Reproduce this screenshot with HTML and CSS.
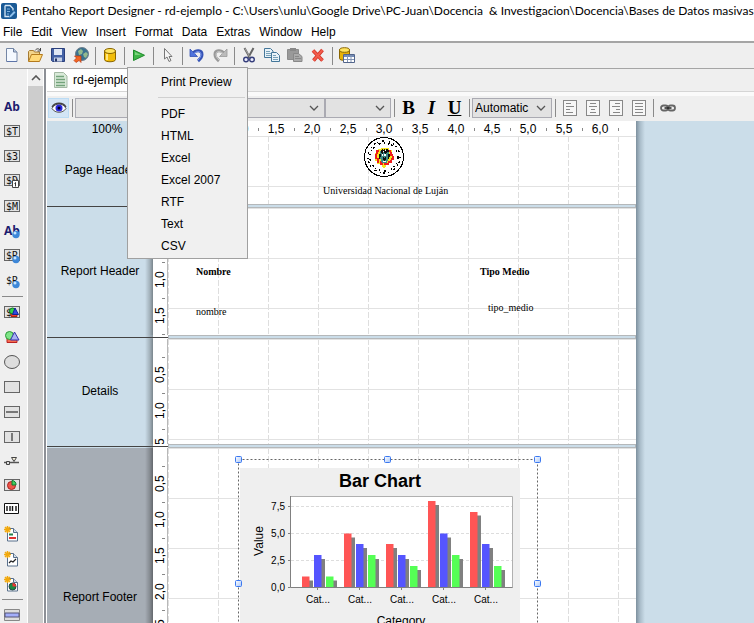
FILE: index.html
```html
<!DOCTYPE html>
<html lang="en">
<head>
<meta charset="utf-8">
<title>Pentaho Report Designer</title>
<link rel="stylesheet" href="styles.css">
</head>
<body>
<header class="titlebar">
  <svg width="16" height="16" viewBox="0 0 16 16" aria-hidden="true"><rect width="16" height="16" rx="2" fill="#1a5a96"/><path d="M4 2.500h5l3 3v2M4 2.500v11h4" fill="none" stroke="#d5e6f5" stroke-width="1.300"/><path d="M6 6h3M6 8.500h3M6 11h2" stroke="#7fb2df"/><path d="M8.500 13l4.500-5 1.500 1.500-4.500 4.500-2 .5z" fill="#8fc1ec"/></svg>
  <span class="title">Pentaho Report Designer - rd-ejemplo - C:\Users\unlu\Google Drive\PC-Juan\Docencia&nbsp; &amp; Investigacion\Docencia\Bases de Datos masivas</span>
</header>
<nav class="menubar">
  <button>File</button><button>Edit</button><button>View</button><button>Insert</button><button>Format</button><button>Data</button><button>Extras</button><button>Window</button><button>Help</button>
</nav>
<div class="toolbar">
  <button class="tool" aria-label="New"><svg width="16" height="16" viewBox="0 0 16 16"><path d="M2.500 1.500h7l3.500 3.500v9.500h-10.500z" fill="#f4f9ff" stroke="#7486a5"/><path d="M9.500 1.500v3.500h3.500" fill="#b9cbe2" stroke="#6c7e9d"/><path d="M3 14.500h10" stroke="#5d74a8"/></svg></button>
  <button class="tool" aria-label="Open"><svg width="16" height="16" viewBox="0 0 16 16"><path d="M1.500 14v-9.500l1-1h4l1 1.500h5v3" fill="#f2d48b" stroke="#a67b32"/><path d="M1.500 14.500l3-7h11l-3 7z" fill="#ffd978" stroke="#b47a1c"/><path d="M8 3.500c2-2.500 4-2 5.500 0m0-2.500v3h-3" fill="none" stroke="#444"/></svg></button>
  <button class="tool" aria-label="Save"><svg width="16" height="16" viewBox="0 0 16 16"><path d="M1.500 1.500h13v13h-12l-1-1z" fill="#4462a6" stroke="#2a3f7c"/><path d="M4 2h8v6h-8z" fill="#dfe7f4"/><path d="M4 10.500h8v4h-8z" fill="#c6d0e5"/><path d="M5 11.500h2v3h-2z" fill="#26376b"/></svg></button>
  <button class="tool" aria-label="Publish"><svg width="16" height="16" viewBox="0 0 16 16"><circle cx="9" cy="7" r="6.500" fill="#39718f" stroke="#6f7f8c"/><path d="M5 4l3-2 2 2-1 3-3 1zM10 7l3-2 2 2-2 4-2-1z" fill="#93b98e"/><path d="M1.500 9h6.500v6.500l-2-2-3 2-2-2 2.500-2.500z" fill="#f26522" stroke="#b93a12" stroke-width=".7"/></svg></button>
  <span class="sep"></span>
  <button class="tool" aria-label="Data source"><svg width="16" height="16" viewBox="0 0 16 16"><path d="M2.500 4v8.500c0 3 11 3 11 0v-8.500z" fill="#f2bd08" stroke="#8a6500"/><ellipse cx="8" cy="4" rx="5.500" ry="2.500" fill="#ffe45e" stroke="#8a6500"/><path d="M5 7v6" stroke="#ffe680" stroke-width="2"/></svg></button>
  <span class="sep"></span>
  <div class="tool-menu">
    <button class="tool" aria-label="Run"><svg width="16" height="16" viewBox="0 0 16 16"><path d="M2.500 3v10.500l11-5.250z" fill="#3fb548" stroke="#1e8a2b"/><path d="M4 5v3l6 0z" fill="#7bd47d"/></svg></button>
    <div class="popup" role="menu">
      <button role="menuitem">Print Preview</button>
      <hr>
      <button role="menuitem">PDF</button><button role="menuitem">HTML</button><button role="menuitem">Excel</button><button role="menuitem">Excel 2007</button><button role="menuitem">RTF</button><button role="menuitem">Text</button><button role="menuitem">CSV</button>
    </div>
  </div>
  <span class="sep"></span>
  <button class="tool" aria-label="Select"><svg width="16" height="16" viewBox="0 0 16 16"><path d="M4.500 1.500v10.500l2.500-2 2 4.500 2-1-2-4h3z" fill="#f5f5f5" stroke="#777"/></svg></button>
  <span class="sep"></span>
  <button class="tool" aria-label="Undo"><svg width="16" height="16" viewBox="0 0 16 16"><path d="M4 6.500c3-4 9-3.500 9 1 0 2.500-1.500 4.500-4 6.500" fill="none" stroke="#3553b5" stroke-width="3"/><path d="M1 2v7.500h7.500z" fill="#4f73dd" stroke="#3553b5" stroke-width=".8"/><path d="M5 6.500c3-3 7-2.500 7 1 0 2-1 3.500-3 5.500" fill="none" stroke="#7f9df2"/></svg></button>
  <button class="tool" aria-label="Redo"><svg width="16" height="16" viewBox="0 0 16 16"><path d="M12 6.500c-3-4-9-3.500-9 1 0 2.500 1.500 4.500 4 6.500" fill="none" stroke="#999" stroke-width="3"/><path d="M15 2v7.500h-7.500z" fill="#bbb" stroke="#999" stroke-width=".8"/><path d="M11 6.500c-3-3-7-2.500-7 1 0 2 1 3.500 3 5.500" fill="none" stroke="#ccc"/></svg></button>
  <span class="sep"></span>
  <button class="tool" aria-label="Cut"><svg width="16" height="16" viewBox="0 0 16 16"><path d="M3.500 1l5.500 10M12.500 1l-5.500 10" stroke="#666" stroke-width="2"/><path d="M4 1.500l5 9" stroke="#bbb" stroke-width=".7"/><circle cx="5" cy="12.500" r="2.300" fill="#eef" stroke="#363f7b" stroke-width="1.400"/><circle cx="11" cy="12.500" r="2.300" fill="#eef" stroke="#363f7b" stroke-width="1.400"/></svg></button>
  <button class="tool" aria-label="Copy"><svg width="16" height="16" viewBox="0 0 16 16"><path d="M.5 1.500h6l2.500 2.500v6.500h-8.500z" fill="#e8f2f8" stroke="#44779a"/><path d="M2 4.500h4M2 6.500h5M2 8.500h5" stroke="#77a0b8"/><path d="M7.500 5.500h5l3 3v6h-8z" fill="#e8f2f8" stroke="#44779a"/><path d="M9 8.500h3M9 10.500h5M9 12.500h5" stroke="#77a0b8"/></svg></button>
  <button class="tool" aria-label="Paste"><svg width="16" height="16" viewBox="0 0 16 16"><path d="M.5 2.500h11v10h-11z" fill="#999" stroke="#8c8c8c"/><path d="M3 1h6v3h-6z" fill="#888"/><path d="M6.500 6.500h5l3.500 3v5h-8.500z" fill="#aaa" stroke="#888"/><path d="M8 9.500h4M8 11.500h6" stroke="#888"/></svg></button>
  <button class="tool" aria-label="Delete"><svg width="16" height="16" viewBox="0 0 16 16"><path d="M3 3.500l9.500 10M12.500 3l-9 10.500" stroke="#cf3427" stroke-width="3.600"/><path d="M3 3.500l9.500 10M12.500 3l-9 10.500" stroke="#f35b4b" stroke-width="2"/></svg></button>
  <span class="sep"></span>
  <button class="tool" aria-label="Query"><svg width="16" height="16" viewBox="0 0 16 16"><path d="M.5 3v8.500c0 2.500 10 2.500 10 0v-8.500z" fill="#e8b204" stroke="#8a6500"/><ellipse cx="5.500" cy="3" rx="5" ry="2.300" fill="#ffe45e" stroke="#8a6500"/><path d="M4.500 7.500h11v8h-11z" fill="#fff" stroke="#52658b"/><path d="M5 8h10v2h-10z" fill="#738bb5"/><path d="M5 12.500h10M8.500 8v7M12 8v7" stroke="#8496b5"/></svg></button>
</div>
<div class="workspace">
  <aside class="side">
    <div class="palette">
      <button aria-label="Label"><svg width="18" height="16" viewBox="0 0 18 16"><text class="ab" x="1" y="13">Ab</text></svg></button>
      <button aria-label="Text field"><svg width="18" height="16" viewBox="0 0 18 16"><rect class="box" x="1.500" y="2.500" width="15" height="11"/><text class="code" x="3" y="12">$T</text></svg></button>
      <button aria-label="Number field"><svg width="18" height="16" viewBox="0 0 18 16"><rect class="box" x="1.500" y="2.500" width="15" height="11"/><text class="code" x="3" y="12">$3</text></svg></button>
      <button aria-label="Date field"><svg width="18" height="16" viewBox="0 0 18 16"><rect class="box" x="1.500" y="1.500" width="15" height="11"/><text class="code" x="3" y="11">$D</text><path d="M9.500 7.500h6v7h-6z" fill="#fff" stroke="#444"/><path d="M11 6v2M14 6v2" stroke="#444"/><path d="M11.500 10.500l1-1v4" fill="none" stroke="#333"/></svg></button>
      <button aria-label="Message field"><svg width="18" height="16" viewBox="0 0 18 16"><rect class="box" x="1.500" y="2.500" width="15" height="11"/><text class="code" x="3" y="12">$M</text></svg></button>
      <button aria-label="Resource label"><svg width="18" height="16" viewBox="0 0 18 16"><text class="ab" x="1" y="12">Ab</text><circle cx="13" cy="11.500" r="3.700" fill="#3d87d8"/><circle cx="12" cy="10" r="1.500" fill="#c6e4ff"/></svg></button>
      <button aria-label="Resource field"><svg width="18" height="16" viewBox="0 0 18 16"><rect class="box" x="1.500" y="1.500" width="15" height="11"/><text class="code" x="3" y="11">$R</text><circle cx="13" cy="11.500" r="3.700" fill="#3d87d8"/><circle cx="12" cy="10" r="1.500" fill="#c6e4ff"/></svg></button>
      <button aria-label="Resource message"><svg width="18" height="16" viewBox="0 0 18 16"><text class="code" x="3" y="11">$R</text><circle cx="13" cy="11.500" r="3.700" fill="#3d87d8"/><circle cx="12" cy="10" r="1.500" fill="#c6e4ff"/></svg></button>
      <hr>
      <button aria-label="Image field"><svg width="18" height="16" viewBox="0 0 18 16"><rect class="box" x="1.500" y="2.500" width="15" height="11"/><text class="code" x="3" y="12">$</text><path d="M8 9.500h6v3h-6z" fill="#f0422c" stroke="#a21"/><circle cx="9.500" cy="7" r="3" fill="#32d34b" stroke="#127a22"/><path d="M12 4l3.500 6.500h-6z" fill="#3347df" stroke="#129"/></svg></button>
      <button aria-label="Image"><svg width="18" height="16" viewBox="0 0 18 16"><path d="M4 9.500h10v4h-10z" fill="#f66b50" stroke="#b22"/><circle cx="6.500" cy="6.500" r="4" fill="#7ee587" stroke="#2a9838"/><path d="M11.500 3l4.500 8h-8.500z" fill="#a8b2f3" stroke="#33a"/></svg></button>
      <button aria-label="Ellipse"><svg width="18" height="16" viewBox="0 0 18 16"><ellipse cx="9" cy="8" rx="7.500" ry="6.500" fill="#ddd" stroke="#555"/></svg></button>
      <button aria-label="Rectangle"><svg width="18" height="16" viewBox="0 0 18 16"><rect class="box" x="1.500" y="2.500" width="15" height="11"/></svg></button>
      <button aria-label="Horizontal line"><svg width="18" height="16" viewBox="0 0 18 16"><rect class="box" x="1.500" y="2.500" width="15" height="11"/><path d="M3 8h12" stroke="#555" stroke-width="1.500"/></svg></button>
      <button aria-label="Vertical line"><svg width="18" height="16" viewBox="0 0 18 16"><rect class="box" x="1.500" y="2.500" width="15" height="11"/><path d="M9 4v8" stroke="#555" stroke-width="1.500"/></svg></button>
      <button class="short" aria-label="Survey scale"><svg width="18" height="16" viewBox="0 0 18 16"><path d="M1 9.500h15" stroke="#555" stroke-width="1.500"/><path d="M3.500 8.500h3v3h-3z" fill="#ddd" stroke="#444"/><path d="M8.500 4.500h5l-2.500 4z" fill="#f5f0dc" stroke="#444"/></svg></button>
      <button class="short" aria-label="Chart"><svg width="18" height="16" viewBox="0 0 18 16"><rect class="box" x="1.500" y="2.500" width="15" height="11"/><circle cx="8.500" cy="8.500" r="4" fill="#ee5548" stroke="#a22"/><path d="M9 8v-4.500a4 4 0 0 1 4 4.500z" fill="#45cf5d" stroke="#173"/></svg></button>
      <button class="short" aria-label="Barcode"><svg width="18" height="16" viewBox="0 0 18 16"><path d="M1.500 2.500h14v10h-14z" fill="#fff" stroke="#111"/><path d="M4 5v5M7 5v5M9.500 5v5M13 5v5" stroke="#111" stroke-width="1.400"/></svg></button>
      <button aria-label="Subreport"><svg width="18" height="18" viewBox="0 0 18 18"><path d="M4.500 3.500h6l4 4v8.500h-10z" fill="#fff" stroke="#59708c"/><path d="M10.500 3.500v4h4" fill="#d4dfea" stroke="#59708c"/><path d="M4.500 1v7M1 4.500h7M2 2l5 5M7 2l-5 5" stroke="#f2a90c" stroke-width="1.500"/><path d="M6 9.500h4" stroke="#25804a" stroke-width="2"/><path d="M6 13h7" stroke="#d33" stroke-width="2"/></svg></button>
      <button aria-label="Sparkline"><svg width="18" height="18" viewBox="0 0 18 18"><path d="M4.500 3.500h6l4 4v8.500h-10z" fill="#fff" stroke="#59708c"/><path d="M10.500 3.500v4h4" fill="#d4dfea" stroke="#59708c"/><path d="M4.500 1v7M1 4.500h7M2 2l5 5M7 2l-5 5" stroke="#f2a90c" stroke-width="1.500"/><path d="M6 13l2-2 2 1 3-3" fill="none" stroke="#222" stroke-width="1.200"/></svg></button>
      <button aria-label="Pie sparkline"><svg width="18" height="18" viewBox="0 0 18 18"><path d="M4.500 3.500h6l4 4v8.500h-10z" fill="#fff" stroke="#59708c"/><path d="M10.500 3.500v4h4" fill="#d4dfea" stroke="#59708c"/><path d="M4.500 1v7M1 4.500h7M2 2l5 5M7 2l-5 5" stroke="#f2a90c" stroke-width="1.500"/><circle cx="9.500" cy="11.500" r="3.500" fill="#198a43" stroke="#244"/><path d="M9.500 11.500v-3.500a3.500 3.500 0 0 1 3.500 3.500z" fill="#e33"/></svg></button>
      <hr>
      <button aria-label="Band"><svg width="18" height="16" viewBox="0 0 18 16"><path d="M1.500 2.500h15v11h-15z" fill="#ddd" stroke="#888"/><path d="M2 6h14v4h-14z" fill="#a3aefa" stroke="#557"/></svg></button>
    </div>
    <div class="scroll"><button aria-label="Scroll up"><svg width="10" height="6" viewBox="0 0 10 6"><path d="M1 5l4-4 4 4" fill="none" stroke="#555" stroke-width="1.600"/></svg></button></div>
  </aside>
  <main class="editor">
    <div class="tabs"><button class="tab"><svg width="14" height="16" viewBox="0 0 14 16"><path d="M.5.5h9l3.500 3.500v11.500h-12.500z" fill="#d9ead9" stroke="#a3b8a3"/><path d="M2 4.500h8M2 7.500h9M2 10.500h9M2 13.500h9" stroke="#73a37b" stroke-width="1.500"/></svg>rd-ejemplo</button></div>
    <div class="formatbar">
      <button class="eye" aria-label="Hide"><svg width="16" height="12" viewBox="0 0 16 12"><path d="M1 6.500c3-6 11-6 14 0-3 5-11 5-14 0z" fill="#fff" stroke="#555"/><circle cx="8" cy="6" r="3.500" fill="#2929dc"/><circle cx="8" cy="6" r="1.500" fill="#002"/><path d="M1 5c3-5 11-5 14 0" fill="none" stroke="#444" stroke-width="1.300"/></svg></button>
      <span class="sep"></span>
      <span class="combo font"><select aria-label="Font"><option></option></select><svg width="10" height="6" viewBox="0 0 10 6"><path d="M1 1l4 4 4-4" fill="none" stroke="#555" stroke-width="1.300"/></svg></span>
      <span class="combo size"><select aria-label="Font size"><option></option></select><svg width="10" height="6" viewBox="0 0 10 6"><path d="M1 1l4 4 4-4" fill="none" stroke="#555" stroke-width="1.300"/></svg></span>
      <span class="sep"></span>
      <button class="letter bold">B</button><button class="letter italic">I</button><button class="letter under">U</button>
      <span class="sep"></span>
      <span class="combo color"><select aria-label="Color"><option>Automatic</option></select><svg width="10" height="6" viewBox="0 0 10 6"><path d="M1 1l4 4 4-4" fill="none" stroke="#555" stroke-width="1.300"/></svg></span>
      <span class="sep"></span>
      <button class="align" aria-label="Left"><svg width="14" height="16" viewBox="0 0 14 16"><rect x=".5" y=".5" width="13" height="15"/><path d="M3 3.500h5M3 6.500h8M3 9.500h4M3 12.500h7"/></svg></button>
      <button class="align" aria-label="Center"><svg width="14" height="16" viewBox="0 0 14 16"><rect x=".5" y=".5" width="13" height="15"/><path d="M4 3.500h6M3 6.500h8M5 9.500h4M4 12.500h6"/></svg></button>
      <button class="align" aria-label="Right"><svg width="14" height="16" viewBox="0 0 14 16"><rect x=".5" y=".5" width="13" height="15"/><path d="M6 3.500h5M3 6.500h8M7 9.500h4M4 12.500h7"/></svg></button>
      <button class="align" aria-label="Justify"><svg width="14" height="16" viewBox="0 0 14 16"><rect x=".5" y=".5" width="13" height="15"/><path d="M3 3.500h8M3 6.500h8M3 9.500h8M3 12.500h8"/></svg></button>
      <span class="sep"></span>
      <button class="link" aria-label="Hyperlink"><svg width="16" height="8" viewBox="0 0 16 8"><rect x="1" y="1.500" width="7" height="5" rx="2.500" fill="none" stroke="#666" stroke-width="1.800"/><rect x="8" y="1.500" width="7" height="5" rx="2.500" fill="none" stroke="#666" stroke-width="1.800"/><path d="M4.500 4h7" stroke="#222" stroke-width="1.500"/></svg></button>
    </div>
    <div class="canvas">
      <div class="sheet">
        <div class="row top">
          <div class="name zoom">100%</div>
          <div class="corner"></div>
          <div class="hruler"><span>0,5</span><span>1,0</span><span>1,5</span><span>2,0</span><span>2,5</span><span>3,0</span><span>3,5</span><span>4,0</span><span>4,5</span><span>5,0</span><span>5,5</span><span>6,0</span></div>
        </div>
        <section class="row page-header">
          <div class="name">Page Header</div>
          <div class="vruler"><span>0,5</span></div>
          <div class="page">
            <svg class="seal" width="42" height="42" viewBox="0 0 42 42" shape-rendering="crispEdges"><circle cx="21" cy="21" r="19.500" fill="#fff" stroke="#000"/><g fill="none" stroke="#000"><circle cx="21" cy="21" r="16" stroke-width="1.500" stroke-dasharray="1 3 2 2 1 4 2 5"/><circle cx="21" cy="21" r="14" stroke-width="1.500" stroke-dasharray="2 4 1 3 1 2 2 5"/></g><path d="M15 13h3v-1h8v2h3v4h1v6h-2v3h-3l-3 5h-2l-2-4h-4v-3h-2v-8h2z" fill="#f8e71c"/><path d="M16 15h-2v4h-1v4h2v3h3v2h7v-2h3v-3h2v-4h-2v-4h-3" fill="none" stroke="#ee1c1c" stroke-width="2" stroke-dasharray="5 1"/><path d="M17 15h9v6l-2 6h-5l-2-6z" fill="#3f8b86"/><path d="M19 13h1v1h1v-1h1v1h1v-1h2v1h1v2h-2v1h-1v1h-1v-1h-1v-1h-1v2h-1v-1h-1v-2h-1zM16 18h2v3h-1v2h-1zM25 18h2v3h-1v2h-1zM20 21h1v1h1v-1h1v3h-1v1h-1v-1h-1z" fill="#111"/><path d="M20 15h1v1h-1zM22 14h1v1h-1zM19 18h1v2h-1zM21 18h2v2h-2zM20 25h3v1h-3z" fill="#fff"/></svg>
            <span class="item uni">Universidad Nacional de Luján</span>
          </div>
        </section>
        <div class="split"><i></i><b></b></div>
        <section class="row report-header">
          <div class="name">Report Header</div>
          <div class="vruler"><span>0,5</span><span>1,0</span><span>1,5</span></div>
          <div class="page">
            <strong class="item h-name">Nombre</strong><strong class="item h-type">Tipo Medio</strong>
            <span class="item f-name">nombre</span><span class="item f-type">tipo_medio</span>
          </div>
        </section>
        <div class="split"><i></i><b></b></div>
        <section class="row details">
          <div class="name">Details</div>
          <div class="vruler"><span>0,5</span><span>1,0</span><span>1,5</span></div>
          <div class="page"></div>
        </section>
        <div class="split"><i></i><b></b></div>
        <section class="row footer">
          <div class="name selected">Report Footer</div>
          <div class="vruler"><span>0,5</span><span>1,0</span><span>1,5</span><span>2,0</span><span>2,5</span><span>3,0</span><span>3,5</span></div>
          <div class="page">
            <svg class="chart" width="308" height="257" viewBox="234 455 308 257">
              <defs>
                <linearGradient id="g" x2="1" y2="1"><stop offset="0" stop-color="#fff"/><stop offset="1" stop-color="#a9c6f8"/></linearGradient>
                <g id="grip"><rect x="-3" y="-3" width="6" height="6" rx="1" fill="url(#g)" stroke="#3b78f0"/></g>
              </defs>
              <path d="M240 468h280v232h-280z" fill="#efefef"/>
              <path d="M238.500 459.500h299v248h-299z" fill="none" stroke="#666" stroke-dasharray="2 2"/>
              <text x="380" y="487" class="c-title">Bar Chart</text>
              <path d="M290.500 496.500h222v91h-222z" fill="#fff" stroke="#b0b0b0"/>
              <path d="M291 506.500h221M291 533.500h221M291 560.500h221" stroke="#ddd" stroke-dasharray="3 2"/>
              <path fill="#808080" d="M306 580.500h7v6.500h-7zM318 559h7v28h-7zM330 580.500h7v6.500h-7zM348 537.500h7v49.500h-7zM360 548h7v39h-7zM372 559h7v28h-7zM390 548h7v39h-7zM402 559h7v28h-7zM414 570h7v17h-7zM432 505h7v82h-7zM444 537.500h7v49.500h-7zM456 559h7v28h-7zM474 515.500h7v71.500h-7zM486 548h7v39h-7zM498 570h7v17h-7z"/>
              <path fill="#f55" d="M302 576.500h7.500v10.500h-7.500zM344 533.500h7.500v53.500h-7.500zM386 544h7.500v43h-7.500zM428 501h7.500v86h-7.500zM470 512h7.500v75h-7.500z"/>
              <path fill="#55f" d="M314 555h7.500v32h-7.500zM356 544h7.500v43h-7.500zM398 555h7.500v32h-7.500zM440 533.500h7.500v53.500h-7.500zM482 544h7.500v43h-7.500z"/>
              <path fill="#5f5" d="M326 576.500h7.500v10.500h-7.500zM368 555h7.500v32h-7.500zM410 566h7.500v21h-7.500zM452 555h7.500v32h-7.500zM494 566h7.500v21h-7.500z"/>
              <path d="M290.500 496v91.500h222M288 506.500h2M288 533.500h2M288 560.500h2M288 587.500h2M317.500 588v2M359.500 588v2M401.500 588v2M443.500 588v2M485.500 588v2" fill="none" stroke="#808080"/>
              <g class="c-y"><text x="285" y="510">7,5</text><text x="285" y="537">5,0</text><text x="285" y="564">2,5</text><text x="285" y="591">0,0</text></g>
              <g class="c-x"><text x="318" y="603">Cat...</text><text x="360" y="603">Cat...</text><text x="402" y="603">Cat...</text><text x="444" y="603">Cat...</text><text x="486" y="603">Cat...</text></g>
              <text class="c-axis" transform="translate(263 541) rotate(-90)">Value</text>
              <text class="c-axis" x="401" y="625">Category</text>
              <use href="#grip" x="238.500" y="459.500"/><use href="#grip" x="387.500" y="459.500"/><use href="#grip" x="537.500" y="459.500"/><use href="#grip" x="238.500" y="583.500"/><use href="#grip" x="537.500" y="583.500"/><use href="#grip" x="238.500" y="707.500"/><use href="#grip" x="387.500" y="707.500"/><use href="#grip" x="537.500" y="707.500"/>
            </svg>
          </div>
        </section>
      </div>
      <div class="desk"></div>
    </div>
  </main>
</div>
</body>
</html>
```
FILE: styles.css
```css
* { box-sizing: border-box; }
body {
  margin: 0;
  height: 100vh;
  overflow: hidden;
  display: flex;
  flex-direction: column;
  background: #efefef;
  color: #000;
  font: 12px/16px "Liberation Sans", Arial, sans-serif;
}
button, select {
  margin: 0;
  padding: 0;
  border: 0;
  background: none;
  color: inherit;
  font: inherit;
}
svg { display: block; flex: none; }
hr { border: 0; margin: 0; }

.titlebar {
  flex: none;
  display: flex;
  align-items: center;
  gap: 5px;
  height: 22px;
  padding-left: 1px;
  background: #fff;
  font: 12px/20px Lato, "Open Sans", sans-serif;
  white-space: nowrap;
}
.menubar {
  flex: none;
  display: flex;
  gap: 9px;
  height: 21px;
  padding: 0 3px;
  background: #fff;
  border-bottom: 2px solid #a5a5a5;
}
.toolbar {
  flex: none;
  display: flex;
  align-items: stretch;
  height: 25px;
}
.tool { width: 23px; height: 24px; display: grid; place-items: center; }
.sep { flex: none; width: 6px; display: flex; justify-content: center; align-items: center; }
.sep::before { content: ""; width: 1px; height: 18px; background: #8a8a8a; }

.tool-menu { position: relative; }
.popup {
  position: absolute;
  z-index: 5;
  left: 0;
  top: 24px;
  width: 121px;
  padding: 3px 2px 1px;
  border: 1px solid #a0a0a0;
  background: #f0f0f0;
}
.popup button { display: block; width: 100%; height: 22px; padding-left: 31px; text-align: left; white-space: nowrap; }
.popup hr { height: 1px; margin: 4px 0 5px 28px; background: #d0d0d0; }

.workspace { flex: 1; min-height: 0; display: flex; border-top: 1px solid #a5a5a5; }
.side { flex: none; display: flex; border-right: 2px solid #8d9096; }
.palette { width: 27px; padding-top: 24px; overflow: hidden; }
.palette button { display: grid; place-items: center; width: 24px; height: 25px; }
.palette .short { height: 24px; }
.palette hr { width: 21px; height: 1px; margin: 3px 0 2px 2px; background: #8a8a8a; }
.box { fill: #e2e2e2; stroke: #666; }
.ab { font: 700 12px "Open Sans", sans-serif; fill: #1c1c6e; }
.code { font: 10px "DejaVu Sans Mono", monospace; fill: #111; }
.scroll { width: 17px; border: 0 solid #fff; border-width: 0 1px; background: #cdcdcd; }
.scroll button { display: grid; place-items: center; width: 100%; height: 17px; background: #f0f0f0; }

.editor { flex: 1; min-width: 0; display: flex; flex-direction: column; border-left: 1px solid #fff; }
.tabs { flex: none; height: 27px; border-bottom: 4px solid #fafafa; box-shadow: inset 0 -1px #d5d5d5; }
.tab { display: flex; align-items: center; gap: 5px; height: 22px; padding: 0 12px 0 7px; background: #fff; }
.formatbar { flex: none; display: flex; align-items: center; height: 25px; padding: 0 0 1px 1px; }
.eye { width: 21px; height: 20px; display: grid; place-items: center; background: #d3e5f5; border: 1px solid #bcdcf4; }
.combo { display: grid; align-items: center; height: 20px; border: 1px solid #aaaab2; background: #e2e2e2; }
.combo select { grid-area: 1 / 1; width: 100%; height: 18px; appearance: none; padding-left: 2px; }
.combo svg { grid-area: 1 / 1; justify-self: end; margin-right: 5px; pointer-events: none; }
.font { width: 250px; }
.size { width: 66px; }
.color { width: 80px; }
.letter { width: 23px; font: bold 19px/20px "Liberation Serif", serif; }
.letter.italic { font-style: italic; }
.letter.under { text-decoration: underline; }
.align { width: 23px; display: grid; place-items: center; }
.align svg { fill: #f7f7f7; stroke: #888; }
.link { width: 23px; display: grid; place-items: center; }

.canvas { flex: 1; min-height: 0; display: flex; overflow: hidden; }
.sheet { flex: none; }
.row { display: grid; grid-template-columns: 106px 15px 468px; overflow: hidden; }
.name {
  display: grid;
  place-items: center;
  padding-bottom: 1px;
  background: linear-gradient(to right, #0000, #0003 60%, #0006) right / 8px 100% no-repeat #cbdde9;
}
.name.selected { background-color: #a6adb5; }
.top { height: 15px; }
.name.zoom { padding: 0 0 0 14px; }
.corner { background: #fff; }
.hruler, .vruler { display: flex; background-color: #fff; overflow: hidden; }
.hruler {
  padding-left: 18px;
  border-bottom: 1px solid #b8b8b8;
  background-image: linear-gradient(to right, transparent 18px, #888 18px 19px, transparent 19px);
  background-size: 36px 3px;
  background-repeat: repeat-x;
  background-position: 0 7px;
}
.hruler span { flex: none; width: 36px; text-align: center; line-height: 16px; }
.vruler {
  flex-direction: column;
  min-height: 0;
  padding-top: 18px;
  border-right: 1px solid #b8b8b8;
  background-image: linear-gradient(transparent 18px, #888 18px 19px, transparent 19px);
  background-size: 3px 36px;
  background-repeat: repeat-y;
  background-position: 9px 0;
}
.vruler span { flex: none; height: 36px; width: 14px; line-height: 14px; text-align: center; writing-mode: vertical-rl; transform: rotate(180deg); }
.page {
  position: relative;
  background:
    linear-gradient(#e2e2e2 1px, transparent 1px) 0 50px / 100% 50px,
    repeating-linear-gradient(transparent 0 6px, #fff 6px 8px),
    linear-gradient(to right, #dedede 1px, transparent 1px) 50px 0 / 50px 100%,
    #fff;
}
.page-header { height: 68px; }
.report-header { height: 127px; }
.details { height: 105px; }
.footer { height: 298px; }
.split { display: grid; grid-template-columns: 121px 468px; height: 4px; }
.split i { background: linear-gradient(transparent 2px, #444 2px 3px, transparent 3px), linear-gradient(to right, #cbdde9 98px, #8c99a2 106px, #fff 106px); }
.split b { background: #cbdde9; border: 1px solid #b5b8ba; }
.item { position: absolute; font: 10px/12px "Liberation Serif", serif; white-space: nowrap; }
strong.item { font-weight: bold; }
.uni { left: 155px; top: 49px; }
.seal { position: absolute; left: 195px; top: 0; }
.h-name { left: 28px; top: 58px; }
.h-type { left: 312px; top: 58px; }
.f-name { left: 28px; top: 98px; }
.f-type { left: 320px; top: 94px; }
.chart { position: absolute; left: 66px; top: 7px; }
.chart text { font-family: "Liberation Sans", Arial, sans-serif; text-anchor: middle; }
.c-title { font-size: 18px; font-weight: bold; }
.chart .c-y text { font-size: 10px; text-anchor: end; }
.c-x { font-size: 10px; }
.c-axis { font-size: 12px; }
.desk { flex: 1; background: linear-gradient(to right, #7d909e, #a9bcc9 4px, #cbdde9 9px); }
```
